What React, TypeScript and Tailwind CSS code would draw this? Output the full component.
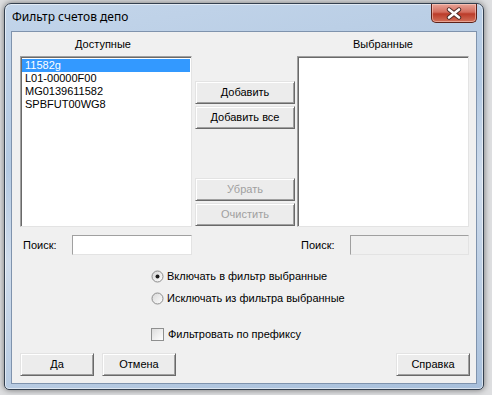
import React from 'react';

const items = ['11582g', 'L01-00000F00', 'MG0139611582', 'SPBFUT00WG8'];

// classic 3D push button
const Btn = ({ label, disabled, w = 'w-[100px]' }: { label: string; disabled?: boolean; w?: string }) => (
  <div
    className={`${w} h-[23px] flex items-center justify-center bg-[#ececec] border border-t-[#e3e3e3] border-l-[#e3e3e3] border-b-[#696969] border-r-[#696969] shadow-[inset_1px_1px_0_#ffffff,inset_-1px_-1px_0_#a0a0a0] ${
      disabled ? 'text-[#a0a0a0]' : 'text-black'
    }`}
  >
    {label}
  </div>
);

const Radio = ({ checked }: { checked?: boolean }) => (
  <svg width="13" height="13" viewBox="0 0 13 13">
    <defs>
      <linearGradient id="rg" x1="0" y1="0" x2="1" y2="1">
        <stop offset="0" stopColor="#d6d6d6" />
        <stop offset="1" stopColor="#ffffff" />
      </linearGradient>
    </defs>
    <circle cx="6.5" cy="6.5" r="5.5" fill="url(#rg)" stroke="#8c8c8c" />
    {checked && <circle cx="6.5" cy="6.5" r="2" fill="#1b1b1b" />}
  </svg>
);

const Listbox = ({ rows }: { rows: string[] }) => (
  <div className="w-[172px] h-[171px] bg-white border border-[#a0a0a0] border-b-[#e3e3e3] border-r-[#e3e3e3] shadow-[inset_1px_1px_0_#696969] p-[1px] pt-[2px]">
    {rows.map((r, i) => (
      <div
        key={r}
        className={`h-[13px] leading-[13px] pl-[3px] ${i === 0 ? 'bg-[#3399ff] text-white' : 'text-black'}`}
      >
        {r}
      </div>
    ))}
  </div>
);

const Field = ({ disabled }: { disabled?: boolean }) => (
  <div
    className={`h-[20px] border border-[#a0a0a0] border-b-[#e3e3e3] border-r-[#e3e3e3] ${
      disabled ? 'w-[119px] bg-[#f0f0f0]' : 'w-[120px] bg-white'
    }`}
  />
);

export default function App() {
  return (
    <div className="w-[492px] h-[395px] overflow-hidden bg-[#dedfe1] pl-[4px] pt-[3px] font-['Liberation_Sans',Arial,sans-serif] text-[11px] text-black">
      <div className="w-[480px] h-[387px] flex flex-col rounded-t-[7px] rounded-b-[5px] border border-[#34404f] bg-[linear-gradient(170deg,#c3d5ea_0%,#b3c9e2_35%,#cfdcec_55%,#a7bfdb_100%)] shadow-[0_0_6px_rgba(0,0,0,0.5),inset_0_0_0_1px_rgba(255,255,255,0.55)]">
        {/* title bar */}
        <div className="h-[27px] flex items-start justify-between pl-[7px] pr-[6px]">
          <div className="mt-[5px] font-['Noto_Sans',sans-serif] text-[12px] leading-[16px] text-black">
            Фильтр счетов депо
          </div>
          <div className="w-[46px] h-[19px] rounded-b-[5px] border border-t-0 border-[#5d2119] bg-[linear-gradient(#e9a497_0%,#d36d5e_45%,#bb3b29_55%,#d2705a_100%)] shadow-[inset_0_0_0_1px_rgba(255,220,210,0.5)] flex items-center justify-center">
            <svg width="18" height="13" viewBox="0 0 18 13">
              <path d="M4 2.5 L14 10.5 M14 2.5 L4 10.5" stroke="#4a2a26" strokeWidth="4.4" strokeLinecap="round" />
              <path d="M4 2.5 L14 10.5 M14 2.5 L4 10.5" stroke="#ffffff" strokeWidth="2.6" strokeLinecap="round" />
            </svg>
          </div>
        </div>

        {/* client area */}
        <div className="mx-[6px] h-[353px] border border-[#7f93ad] bg-[#f0f0f0] flex flex-col">
          <div className="flex pl-[8px] pt-[6px]">
            <div className="flex flex-col">
              <div className="h-[13px] leading-[13px] text-center pr-[6px]">Доступные</div>
              <div className="mt-[5px]">
                <Listbox rows={items} />
              </div>
            </div>
            <div className="ml-[3px] flex flex-col pt-[43px]">
              <Btn label="Добавить" />
              <div className="mt-[2px]">
                <Btn label="Добавить все" />
              </div>
              <div className="mt-[49px]">
                <Btn label="Убрать" disabled />
              </div>
              <div className="mt-[2px]">
                <Btn label="Очистить" disabled />
              </div>
            </div>
            <div className="ml-[2px] flex flex-col">
              <div className="h-[13px] leading-[13px] text-center">Выбранные</div>
              <div className="mt-[5px]">
                <Listbox rows={[]} />
              </div>
            </div>
          </div>

          {/* search */}
          <div className="mt-[8px] flex items-center pl-[11px]">
            <div className="w-[49px]">Поиск:</div>
            <Field />
            <div className="w-[49px] ml-[109px]">Поиск:</div>
            <Field disabled />
          </div>

          {/* options */}
          <div className="mt-[13px] flex flex-col pl-[139px]">
            <div className="h-[16px] flex items-center gap-[3px]">
              <Radio checked />
              <span>Включать в фильтр выбранные</span>
            </div>
            <div className="mt-[6px] h-[16px] flex items-center gap-[3px]">
              <Radio />
              <span>Исключать из фильтра выбранные</span>
            </div>
            <div className="mt-[20px] h-[16px] flex items-center gap-[4px]">
              <div className="w-[13px] h-[13px] border border-[#8e8f8f] bg-[linear-gradient(135deg,#dcdcdc,#ffffff)]" />
              <span>Фильтровать по префиксу</span>
            </div>
          </div>

          {/* bottom buttons */}
          <div className="mt-[11px] flex pl-[8px] pr-[6px]">
            <Btn label="Да" w="w-[74px]" />
            <div className="ml-[8px]">
              <Btn label="Отмена" w="w-[74px]" />
            </div>
            <div className="ml-auto">
              <Btn label="Справка" w="w-[74px]" />
            </div>
          </div>
        </div>
      </div>
    </div>
  );
}
